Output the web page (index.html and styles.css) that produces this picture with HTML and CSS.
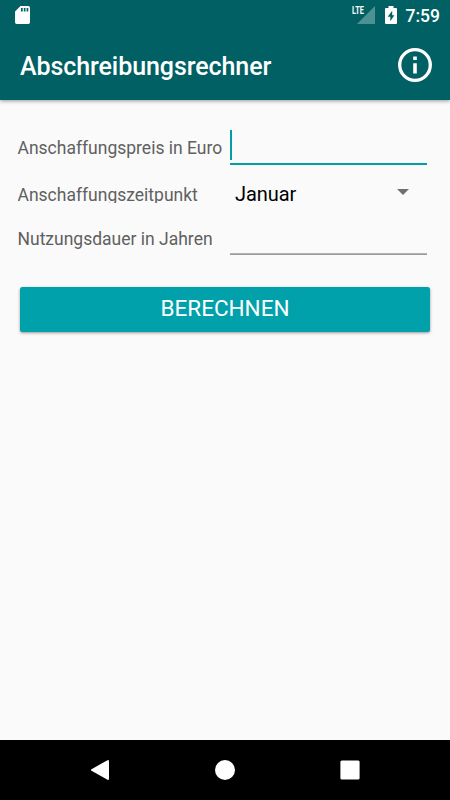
FILE: index.html
```html
<!DOCTYPE html>
<html lang="de">
<head>
<meta charset="utf-8">
<title>Abschreibungsrechner</title>
<link rel="stylesheet" href="styles.css">
</head>
<body>
<div class="screen">
  <header class="header">
    <div class="status">
      <svg class="sd" width="15" height="18" viewBox="0 0 15 18"><path fill="#fff" fill-rule="evenodd" d="M5.5 0H13.2Q15 0 15 1.8V16.2Q15 18 13.2 18H1.8Q0 18 0 16.2V5.5ZM6 2V5.4H7.7V2ZM8.8 2V5.4H10.5V2ZM11.6 2V5.4H13.3V2Z"/></svg>
      <div class="signal">
        <svg width="18" height="18" viewBox="0 0 18 18"><path fill="#4d9193" d="M18 0V18H0Z"/></svg>
        <span class="lte">LTE</span>
      </div>
      <svg class="battery" width="12" height="18" viewBox="0 0 12 18"><path fill="#fff" fill-rule="evenodd" d="M3.5 0H8.5V2H11Q12 2 12 3V17Q12 18 11 18H1Q0 18 0 17V3Q0 2 1 2H3.5ZM7.2 4.8L2.7 10.8H5.3V15.2L9.4 9.2H7.2Z"/></svg>
      <span class="clock">7:59</span>
    </div>
    <div class="toolbar">
      <h1 class="title">Abschreibungsrechner</h1>
      <svg class="info" width="34" height="34" viewBox="0 0 34 34"><circle cx="17" cy="17" r="15.3" fill="none" stroke="#fff" stroke-width="3.3"/><path fill="#fff" d="M15.2 8.5H18.8V12H15.2ZM15.2 15.2H18.8V25.5H15.2Z"/></svg>
    </div>
  </header>
  <main class="form">
    <div class="row row-price">
      <label class="label">Anschaffungspreis in Euro</label>
      <div class="field focused"><span class="caret"></span></div>
    </div>
    <div class="row row-month">
      <label class="label clipped">Anschaffungszeitpunkt</label>
      <div class="select"><span>Januar</span><svg width="12" height="6" viewBox="0 0 12 6"><path fill="#707070" d="M0 0H12L6 6Z"/></svg></div>
    </div>
    <div class="row row-years">
      <label class="label">Nutzungsdauer in Jahren</label>
      <div class="field"></div>
    </div>
    <button class="submit">BERECHNEN</button>
  </main>
  <nav class="nav">
    <svg width="20" height="22" viewBox="0 0 20 22"><path fill="#fff" stroke="#fff" stroke-width="2" stroke-linejoin="round" d="M2 11L18 2V20Z"/></svg>
    <svg width="20" height="20" viewBox="0 0 20 20"><circle cx="10" cy="10" r="10" fill="#fff"/></svg>
    <svg width="20" height="20" viewBox="0 0 20 20"><rect x=".4" y=".4" width="19.2" height="19.2" rx="1.5" fill="#fff"/></svg>
  </nav>
</div>
</body>
</html>
```
FILE: styles.css
```css
* { box-sizing: border-box; }
body { margin: 0; font-family: Roboto, sans-serif; }
.screen {
  width: 450px;
  height: 800px;
  display: flex;
  flex-direction: column;
  background: #fafafa;
  overflow: hidden;
}
.header {
  height: 100px;
  background: #006064;
  color: #fff;
  box-shadow: 0 1px 4px rgba(0, 0, 0, .4);
}
svg { display: block; flex: none; }
.status {
  height: 30px;
  display: flex;
  align-items: flex-start;
  padding: 6px 10px 0 15px;
}
.signal { position: relative; margin-left: auto; }
.lte {
  position: absolute;
  left: -4.5px;
  top: -1px;
  font-size: 10.5px;
  line-height: 11px;
  font-weight: 700;
  transform: scaleX(.7);
  transform-origin: 0 0;
}
.battery { margin-left: 10px; }
.clock {
  width: 34.5px;
  margin-left: 9px;
  font-size: 17.5px;
  line-height: 20px;
  font-weight: 500;
  white-space: nowrap;
}
.toolbar {
  height: 70px;
  display: flex;
  align-items: center;
  justify-content: space-between;
  padding: 0 18px 0 20px;
}
.title {
  margin: 3px 0 0;
  font-size: 25px;
  line-height: 30px;
  font-weight: 500;
  letter-spacing: -.08px;
}
.form {
  flex: 1;
  display: flex;
  flex-direction: column;
  padding: 30px 20px 0 17.5px;
}
.row { display: flex; }
.row-price { height: 51px; }
.row-month { height: 44px; }
.row-years { height: 62px; }
.label {
  width: 212.5px;
  font-size: 17.5px;
  line-height: 22px;
  color: #606060;
  white-space: nowrap;
}
.row-price .label { padding-top: 7px; }
.row-month .label { height: 22px; padding-top: 3px; }
.row-years .label { padding-top: 3px; }
.clipped { overflow: hidden; }
.field {
  width: 197px;
  height: 30px;
  border-bottom: 1px solid #9a9a9a;
  box-shadow: inset 0 -1px 0 #b4b4b4;
}
.focused {
  height: 35px;
  border-bottom: 2px solid #009fa8;
  box-shadow: none;
}
.caret {
  display: block;
  width: 2px;
  height: 30px;
  background: #009fa8;
}
.select {
  width: 178.5px;
  height: 24px;
  margin-left: 5px;
  display: flex;
  align-items: flex-start;
  justify-content: space-between;
  padding-right: 5px;
  font-size: 20px;
  line-height: 27px;
  letter-spacing: -.08px;
  color: #000;
}
.select svg { margin-top: 8px; }
.submit {
  width: 410px;
  height: 45px;
  margin: 0 0 0 2.5px;
  padding: 0 0 2px;
  border: 0;
  border-radius: 2.5px;
  background: #00a1ab;
  color: #fff;
  font: 400 22.5px/43px Roboto, sans-serif;
  box-shadow: 0 1px 3px rgba(0, 0, 0, .4);
}
.nav {
  height: 60px;
  display: flex;
  align-items: center;
  justify-content: space-between;
  padding: 0 90px;
  background: #000;
}
```
